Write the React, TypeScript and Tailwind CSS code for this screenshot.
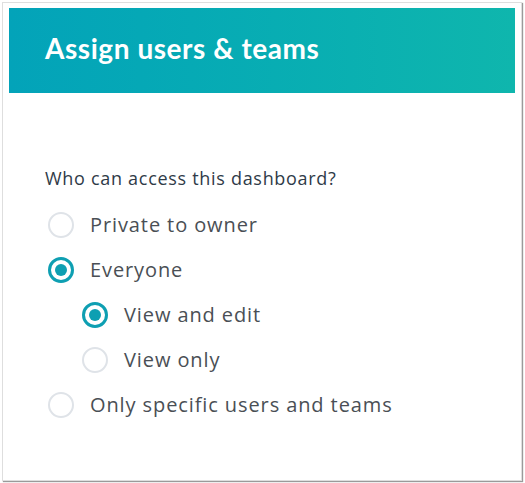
import React from "react";

function Radio({ checked, label }: { checked?: boolean; label: string }) {
  return (
    <div className="flex items-center h-[45px]">
      <span
        className={
          "flex items-center justify-center w-[26px] h-[26px] rounded-full shrink-0 bg-white " +
          (checked ? "border-[3px] border-[#0e9fb2]" : "border-2 border-[#dfe3e8]")
        }
      >
        {checked && <span className="w-[12px] h-[12px] rounded-full bg-[#0e9fb2]" />}
      </span>
      <span
        className="ml-[16px] text-[20px] text-[#4a4f55] tracking-[0.9px]"
        style={{ fontFamily: "'Open Sans', sans-serif" }}
      >
        {label}
      </span>
    </div>
  );
}

export default function App() {
  return (
    <div
      className="w-[525px] h-[483px] bg-white pt-[2px] pl-[2px]"
      style={{ fontFamily: "Lato, 'Noto Sans', sans-serif" }}
    >
      <div className="w-[520px] h-[479px] bg-white border border-[#dedede] shadow-[1px_1px_1px_#9a9a9a] pt-[5px] pl-[6px] pr-[6px]">
        <div className="h-[85px] bg-gradient-to-r from-[#03a3b9] to-[#0fb6ad] flex items-center pl-[36px] pb-[6px]">
          <h1 className="text-[28px] font-bold text-white tracking-[0.55px]">Assign users &amp; teams</h1>
        </div>
        <div className="pl-[36px] pt-[75px]">
          <p
            className="text-[18px] font-medium text-[#2f3b48] tracking-[0.7px] leading-[20px]"
            style={{ fontFamily: "'Open Sans', sans-serif" }}
          >
            Who can access this dashboard?
          </p>
          <div className="mt-[14px] pl-[3px]">
            <Radio label="Private to owner" />
            <Radio checked label="Everyone" />
            <div className="pl-[34px]">
              <Radio checked label="View and edit" />
              <Radio label="View only" />
            </div>
            <Radio label="Only specific users and teams" />
          </div>
        </div>
      </div>
    </div>
  );
}
